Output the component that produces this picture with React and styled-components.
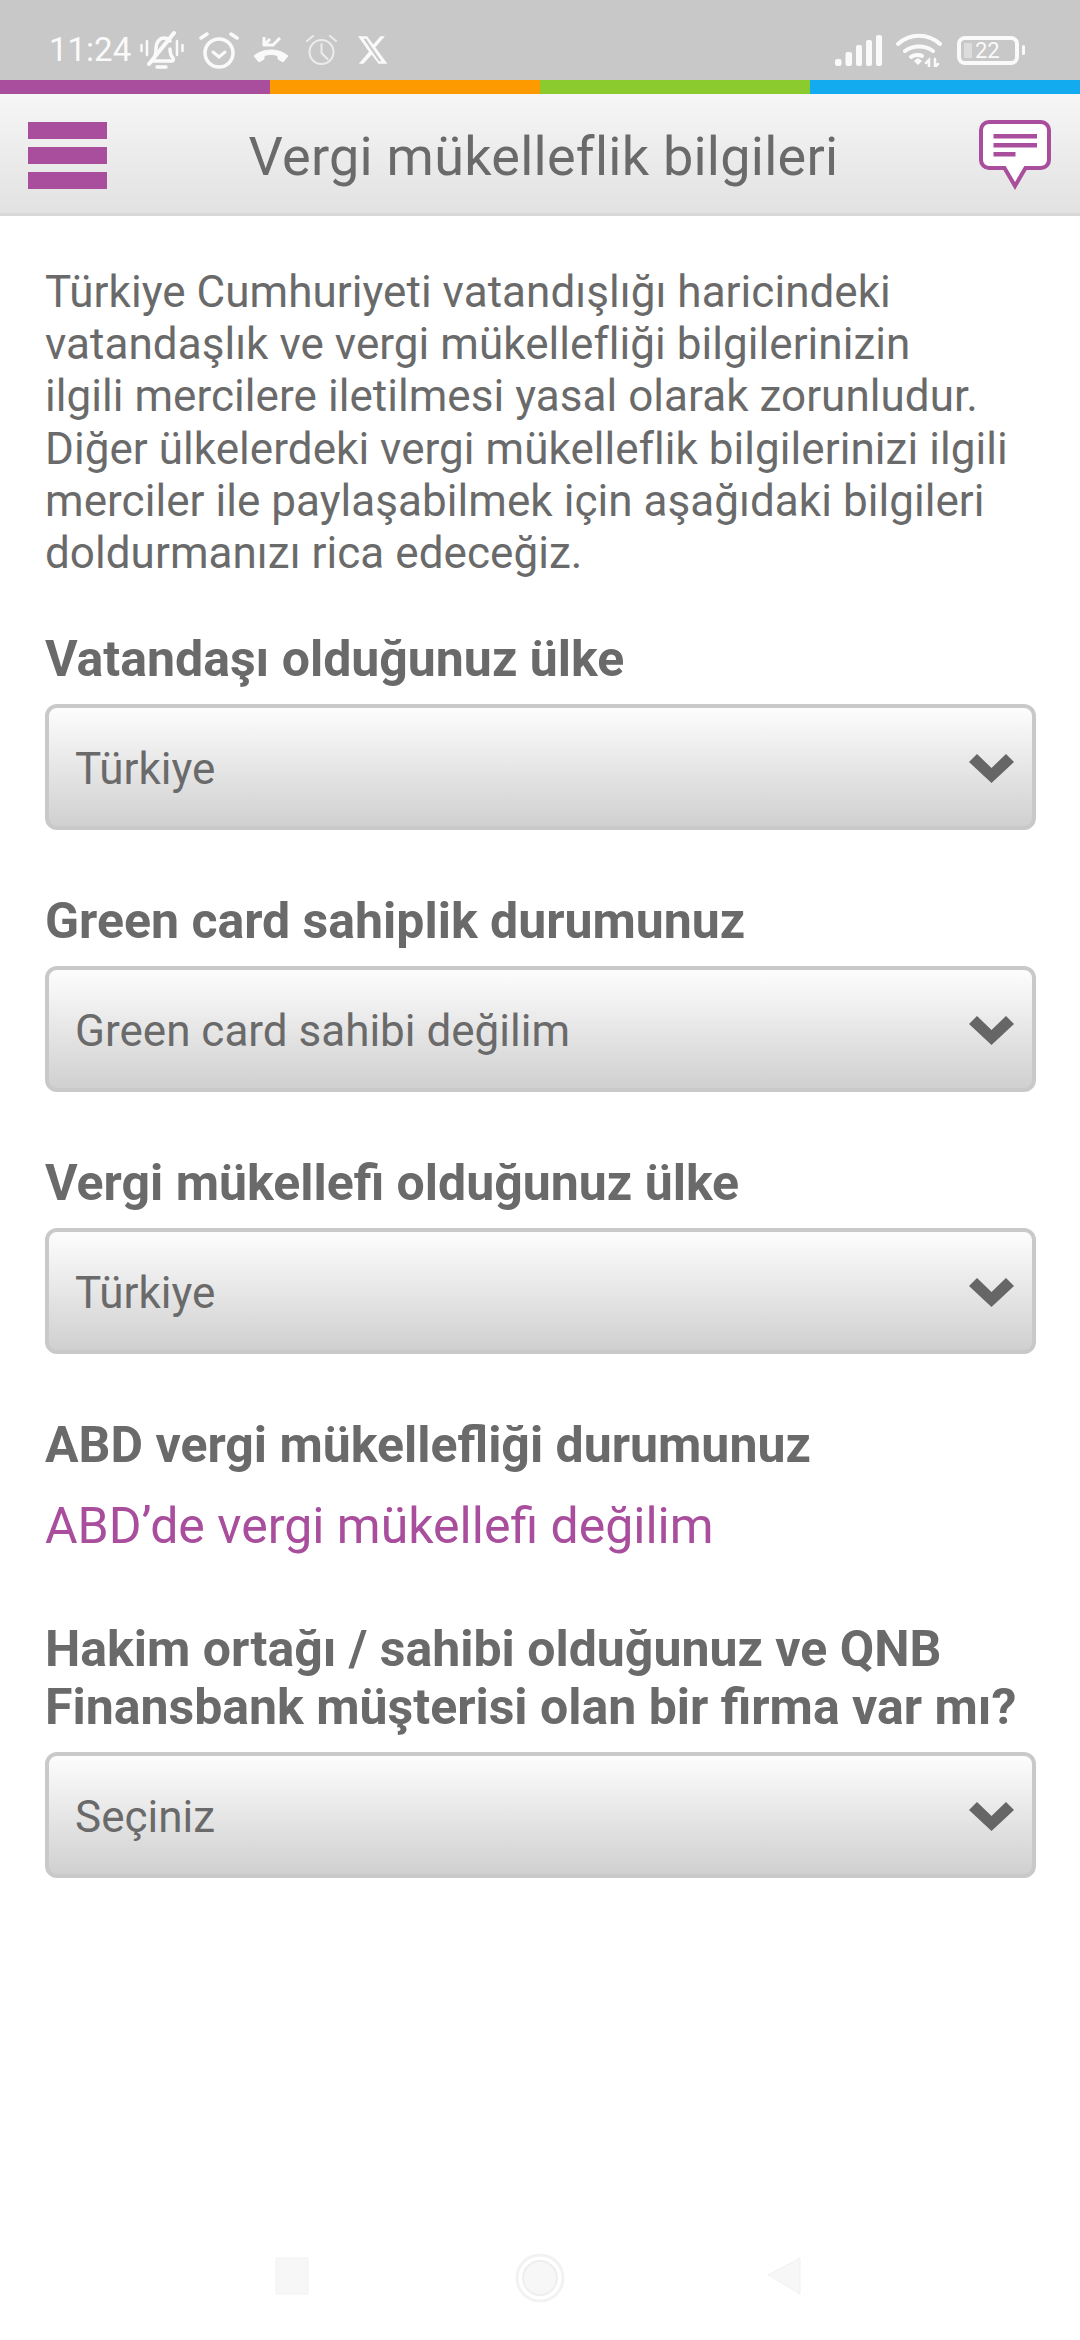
import React from "react";
import styled, { createGlobalStyle } from "styled-components";

const Global = createGlobalStyle`
  html, body { margin: 0; padding: 0; background: #fff; }
  body { font-family: Roboto, "Noto Sans", sans-serif; }
`;

const Page = styled.div`
  width: 1080px; height: 2340px; display: flex; flex-direction: column; background: #fff; overflow: hidden; position: relative;
`;
const StatusBar = styled.div`
  height: 80px; background: #c8c8c8; display: flex; align-items: flex-start; justify-content: space-between;
  padding: 30px 55px 0 49px; box-sizing: border-box; color: #fafafa;
`;
const StatusGroup = styled.div`display: flex; align-items: center; height: 40px;`;
const Time = styled.span`font-size: 33px; line-height: 40px; width: 91px; flex: none;`;
const Stripe = styled.div`display: flex; height: 14px; flex: none;`;
const StripePart = styled.div`flex: 1; background: ${p => p.$c};`;
const Header = styled.header`
  height: 122px; flex: none; box-sizing: border-box; position: relative; display: flex; align-items: center; justify-content: center;
  padding: 5px 0 0 7px;
  background: linear-gradient(#f6f6f6, #e2e2e2); border-bottom: 3px solid #d8d8d8;
`;
const Title = styled.h1`margin: 0; font-size: 54px; font-weight: 400; color: #6a6a6a; letter-spacing: .25px;`;
const Menu = styled.div`
  position: absolute; left: 28px; top: 28px; width: 79px; display: flex; flex-direction: column; gap: 8px;
`;
const MenuBar = styled.div`height: 17px; background: #a84e9d;`;
const Chat = styled.svg`position: absolute; left: 978px; top: 26px;`;
const Content = styled.main`padding: 50px 44px 0 45px; flex: 1;`;
const Intro = styled.p`margin: 0 0 51px; font-size: 44px; line-height: 52.2px; color: #6a6a6a; white-space: pre-line; letter-spacing: .05px;`;
const Field = styled.section`margin-bottom: 62px;`;
const Label = styled.h2`margin: 0 0 ${p => p.$mb ?? 16}px; font-size: 50px; line-height: 58px; font-weight: 700; color: #6a6a6a; white-space: nowrap;`;
const Select = styled.div`
  height: 126px; box-sizing: border-box; border: 4px solid #c9c9c9; border-radius: 12px; padding: 3px 18px 0 26px;
  display: flex; align-items: center; justify-content: space-between;
  background: linear-gradient(#fdfdfd, #d0d0d0); color: #6a6a6a; font-size: 44px;
`;
const Value = styled.div`margin: 0 0 65px; font-size: 50px; line-height: 58px; color: #a84e9d;`;
const NavBar = styled.div`
  position: absolute; left: 0; right: 0; top: 2240px; height: 100px; display: flex;
`;
const NavIcon = styled.svg`position: absolute; left: ${p => p.$x}px; top: ${p => p.$y ?? 14}px;`;

const Chevron = () => (
  <svg width="45" height="29" viewBox="0 0 45 29"><path d="M0 8 L8 0 L22.500 14 L37 0 L45 8 L22.500 29 Z" fill="#666" /></svg>
);
const Sel = ({ children }) => <Select>{children}<Chevron /></Select>;

const W = "#fafafa";
const Bell = () => (
  <svg width="44" height="38" viewBox="0 0 44 38" fill="none" stroke={W} strokeWidth="3.500" strokeLinecap="round">
    <path d="M1.500 14v6M7 10v14M37 10v14M42.500 14v6" strokeWidth="2.500" />
    <path d="M14 27c2-3 2-6 2-10 0-6 4-10 8-10 3 0 5 1 6 3M30 18c0 4 1 7 3 9 1 2 0 3-1 3H12" />
    <path d="M9 33 L34 2" strokeWidth="4" />
    <path d="M17 36h9" />
  </svg>
);
const AlarmA = () => (
  <svg width="40" height="37" viewBox="0 0 40 37" fill="none" stroke={W} strokeWidth="3.500" strokeLinecap="round" style={{ marginLeft: 15 }}>
    <circle cx="20" cy="21" r="14" /><path d="M14 20l6 5 6-5" strokeWidth="3" /><path d="M2 6l6-4M38 6l-6-4" />
  </svg>
);
const Phone = () => (
  <svg width="36" height="28" viewBox="0 0 36 28" fill={W} stroke={W} strokeLinejoin="round" style={{ marginLeft: 14 }}>
    <path d="M1 20c9-8 25-8 34 0l-5 6-5-3v-3c-4-2-10-2-14 0v3l-5 3z" />
    <path d="M11 1v8h8M11 9 L17 3M19 10l8-8" fill="none" strokeWidth="3" />
  </svg>
);
const AlarmB = () => (
  <svg width="33" height="30" viewBox="0 0 33 30" fill="none" stroke="#ececec" strokeWidth="2" strokeLinecap="round" style={{ marginLeft: 16 }}>
    <circle cx="16.500" cy="17" r="12" /><path d="M16.500 9v9l6 6M2 6l6-5M31 6l-6-5" />
  </svg>
);
const XLogo = () => (
  <svg width="31" height="30" viewBox="0 0 24 24" fill={W} style={{ marginLeft: 19 }} preserveAspectRatio="none">
    <path d="M18.200 1h3.400l-7.400 8.800L23.500 23h-6.800l-5.300-7.300L5 23H1.400l7.900-9.600L.8 1h7l4.800 6.600zm-1.200 20h1.900L7 3H5z" />
  </svg>
);
const Signal = () => (
  <svg width="48" height="31" viewBox="0 0 48 31" fill={W}>
    <rect x="0" y="24" width="6.500" height="7" rx="2" /><rect x="10.500" y="17" width="6.500" height="14" rx="2" />
    <rect x="21" y="10" width="6" height="21" rx="2" /><rect x="31" y="5" width="6" height="26" rx="2" /><rect x="41" y="0" width="6" height="31" rx="2" />
  </svg>
);
const Wifi = () => (
  <svg width="46" height="34" viewBox="0 0 46 34" fill="none" stroke={W} strokeWidth="4" strokeLinecap="round" style={{ marginLeft: 13 }}>
    <path d="M2 11c12-11 30-11 42 0M9 18c8-6 20-6 28 0M15 24c3-2 8-3 11-1" />
    <path d="M18 28l4-3 4 3-4 4z" fill={W} stroke="none" />
    <path d="M33 34v-7l-3 3M39 26v8l3-3" strokeWidth="2.500" />
  </svg>
);
const BatteryBox = styled.div`
  height: 21px; border: 4px solid ${W}; border-radius: 8px; margin-left: 15px; margin-right: 6px; position: relative;
  display: flex; align-items: center; padding-left: 14px; box-sizing: content-box; width: 40px;
  font-size: 22px; color: ${W};
  &::before { content: ""; position: absolute; left: 3px; top: 3px; bottom: 3px; width: 8px; background: #dcdcdc; }
  &::after { content: ""; position: absolute; right: -10px; top: 5px; height: 10px; width: 3px; border-radius: 2px; background: ${W}; }
`;

export default function App() {
  return (
    <Page>
      <Global />
      <StatusBar>
        <StatusGroup>
          <Time>11:24</Time><Bell /><AlarmA /><Phone /><AlarmB /><XLogo />
        </StatusGroup>
        <StatusGroup>
          <Signal /><Wifi /><BatteryBox>22</BatteryBox>
        </StatusGroup>
      </StatusBar>
      <Stripe>
        <StripePart $c="#a84e9d" /><StripePart $c="#fd9a00" /><StripePart $c="#8ccb2e" /><StripePart $c="#13abf0" />
      </Stripe>
      <Header>
        <Menu><MenuBar /><MenuBar /><MenuBar /></Menu>
        <Title>Vergi mükelleflik bilgileri</Title>
        <Chat width="74" height="70" viewBox="0 0 74 70">
          <path d="M11 2h52a8 8 0 0 1 8 8v30a8 8 0 0 1-8 8H47.500L37 66 26.500 48H11a8 8 0 0 1-8-8V10a8 8 0 0 1 8-8z" fill="#fff" stroke="#a84e9d" strokeWidth="4" />
          <path d="M15.500 14h43.500v4.500H15.500zM15.500 23h43.500v4.500H15.500zM15.500 32h22v4.500H15.500z" fill="#a84e9d" />
        </Chat>
      </Header>
      <Content>
        <Intro>{"Türkiye Cumhuriyeti vatandışlığı haricindeki\nvatandaşlık ve vergi mükellefliği bilgilerinizin\nilgili mercilere iletilmesi yasal olarak zorunludur.\nDiğer ülkelerdeki vergi mükelleflik bilgilerinizi ilgili\nmerciler ile paylaşabilmek için aşağıdaki bilgileri\ndoldurmanızı rica edeceğiz."}</Intro>
        <Field><Label>Vatandaşı olduğunuz ülke</Label><Sel>Türkiye</Sel></Field>
        <Field><Label>Green card sahiplik durumunuz</Label><Sel>Green card sahibi değilim</Sel></Field>
        <Field><Label>Vergi mükellefi olduğunuz ülke</Label><Sel>Türkiye</Sel></Field>
        <Label $mb={23}>ABD vergi mükellefliği durumunuz</Label>
        <Value>ABD’de vergi mükellefi değilim</Value>
        <Label>Hakim ortağı / sahibi olduğunuz ve QNB<br />Finansbank müşterisi olan bir firma var mı?</Label>
        <Sel>Seçiniz</Sel>
      </Content>
      <NavBar>
        <NavIcon $x={272} $y={14} width="40" height="44" viewBox="0 0 40 44"><rect x="4" y="4" width="32" height="36" rx="1" fill="#f7f7f7" stroke="#f1f1f1" /></NavIcon>
        <NavIcon $x={514} $y={12} width="52" height="52" viewBox="0 0 52 52" fill="none"><circle cx="26" cy="26" r="23" stroke="#f2f2f2" strokeWidth="3" /><circle cx="26" cy="26" r="17" fill="#f7f7f7" stroke="#eee" strokeWidth="2" /></NavIcon>
        <NavIcon $x={764} $y={14} width="40" height="44" viewBox="0 0 40 44"><path d="M36 4v36L4 21z" fill="#f7f7f7" stroke="#f1f1f1" /></NavIcon>
      </NavBar>
    </Page>
  );
}
